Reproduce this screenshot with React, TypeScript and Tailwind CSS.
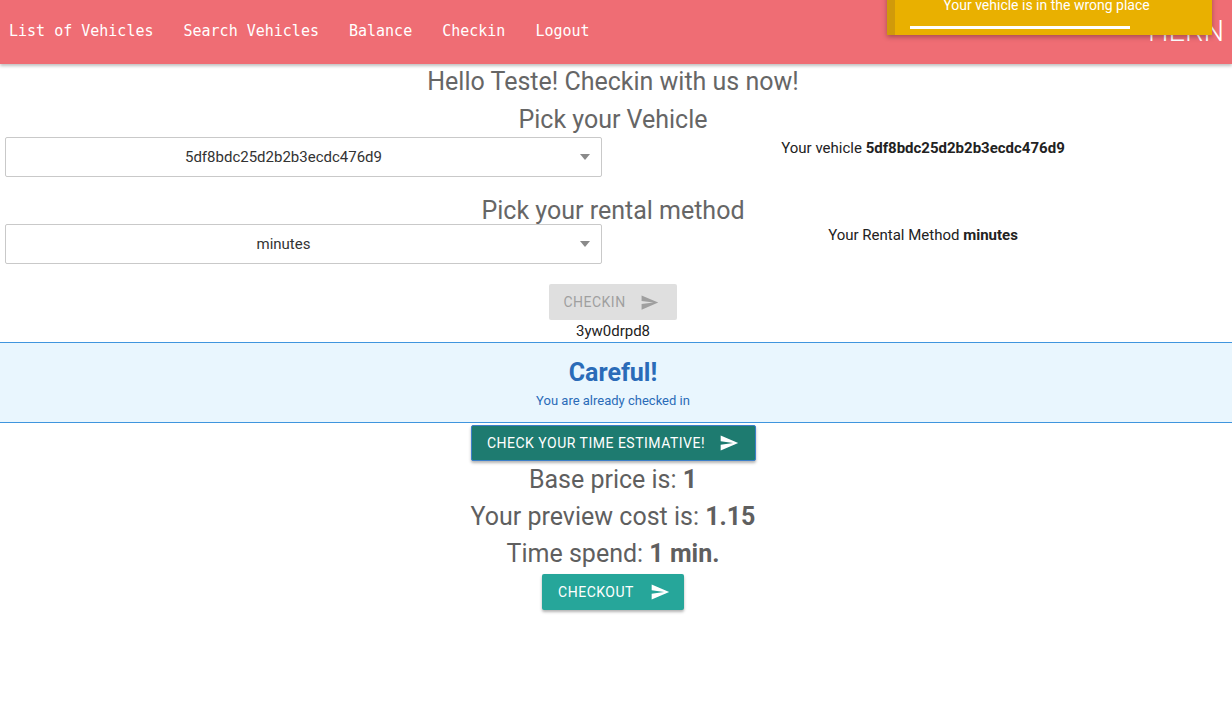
import React from "react";

function SendIcon({ className }: { className?: string }) {
    return (
        <svg viewBox="0 0 24 24" className={className} fill="currentColor">
            <path d="M2.01 21L23 12 2.01 3 2 10l15 2-15 2z" />
        </svg>
    );
}

function FakeSelect({ value }: { value: string }) {
    return (
        <div className="relative flex h-[40px] items-center justify-center rounded-[2px] border border-[#c9c9c9] bg-white pr-[40px] text-[15px] text-[#333]">
            {value}
            <span className="absolute right-[11px] top-[16px] h-0 w-0 border-x-[5px] border-t-[6px] border-x-transparent border-t-[#8a8a8a]" />
        </div>
    );
}

export default function App() {
    const links = ["List of Vehicles", "Search Vehicles", "Balance", "Checkin", "Logout"];
    return (
        <div className="relative min-h-[707px] bg-white font-['Roboto',sans-serif]">
            {/* nav */}
            <nav className="relative z-10 flex h-[64px] items-center justify-between bg-[#ef6d74] pb-[2px] pl-[9px] pr-[10px] shadow-[0_2px_3px_rgba(0,0,0,0.25)]">
                <ul className="flex gap-[30px] font-['DejaVu_Sans_Mono',monospace] text-[15px] text-white">
                    {links.map((l) => (
                        <li key={l}>{l}</li>
                    ))}
                </ul>
                <span className="mr-[-2px] text-[29px] font-light leading-none text-white">HERN</span>
            </nav>

            {/* toast */}
            <div className="absolute left-[887px] top-[-12px] z-20 flex h-[47px] w-[325px] border-l-[8px] border-[#d09a0a] bg-[#e9b000] shadow-[0_2px_5px_rgba(0,0,0,0.3)]">
                <div className="flex w-full flex-col items-center pr-[14px]">
                    <span className="mt-[7px] text-[14px] leading-[20px] text-white">Your vehicle is in the wrong place</span>
                    <span className="ml-[-53px] mt-[11px] h-[3px] w-[220px] bg-white" />
                </div>
            </div>

            <main className="flex flex-col items-center pr-[6px] text-center">
                <h5 className="mt-[2px] h-[32px] text-[25px] leading-[32px] text-[#666]">Hello Teste! Checkin with us now!</h5>
                <h5 className="mt-[6px] h-[32px] text-[25px] leading-[32px] text-[#666]">Pick your Vehicle</h5>

                <div className="-mr-[6px] mt-[1px] grid grid-cols-2 self-stretch">
                    <div className="pl-[5px] pr-[14px]">
                        <FakeSelect value="5df8bdc25d2b2b3ecdc476d9" />
                    </div>
                    <p className="mt-[1px] pr-[2px] text-[15px] leading-[20px] text-[#222]">
                        Your vehicle <b>5df8bdc25d2b2b3ecdc476d9</b>
                    </p>
                </div>

                <h5 className="mt-[18px] h-[32px] text-[25px] leading-[32px] text-[#666]">Pick your rental method</h5>

                <div className="-mr-[6px] mt-[-3px] grid grid-cols-2 self-stretch">
                    <div className="pl-[5px] pr-[14px]">
                        <FakeSelect value="minutes" />
                    </div>
                    <p className="mt-[1px] pr-[2px] text-[15px] leading-[20px] text-[#222]">
                        Your Rental Method <b>minutes</b>
                    </p>
                </div>

                <button className="mt-[20px] flex h-[36px] w-[128px] items-center justify-center gap-[14px] rounded-[2px] bg-[#dfdfdf] pr-[4px] text-[14px] uppercase tracking-[0.5px] text-[#9f9f9f]">
                    Checkin
                    <SendIcon className="h-[19px] w-[19px]" />
                </button>
                <p className="h-[22px] text-[15px] leading-[22px] text-[#222]">3yw0drpd8</p>

                <div className="-mr-[6px] self-stretch border-y border-y-[#3f95de] bg-[#e9f6fe] pb-[12px] pr-[6px] pt-[11px] text-[#2a6bb8]">
                    <h3 className="text-[25px] font-bold leading-[38px]">Careful!</h3>
                    <p className="text-[13px] leading-[18px]">You are already checked in</p>
                </div>

                <button className="mt-[2px] flex h-[36px] w-[285px] items-center justify-center gap-[14px] rounded-[2px] border border-[#3d7fc9] bg-[#1e7b70] text-[14px] uppercase tracking-[0.5px] text-white shadow-[0_2px_3px_rgba(0,0,0,0.3)]">
                    Check your time estimative!
                    <SendIcon className="h-[20px] w-[20px]" />
                </button>

                <p className="text-[25px] leading-[37px] text-[#5f5f5f]">
                    Base price is: <b>1</b>
                </p>
                <p className="text-[25px] leading-[37px] text-[#5f5f5f]">
                    Your preview cost is: <b>1.15</b>
                </p>
                <p className="text-[25px] leading-[37px] text-[#5f5f5f]">
                    Time spend: <b>1 min.</b>
                </p>

                <button className="mt-[2px] flex h-[36px] w-[142px] items-center justify-center gap-[16px] rounded-[2px] bg-[#26a69a] pl-[2px] text-[14px] uppercase tracking-[0.5px] text-white shadow-[0_2px_3px_rgba(0,0,0,0.3)]">
                    Checkout
                    <SendIcon className="h-[20px] w-[20px]" />
                </button>
            </main>
        </div>
    );
}
